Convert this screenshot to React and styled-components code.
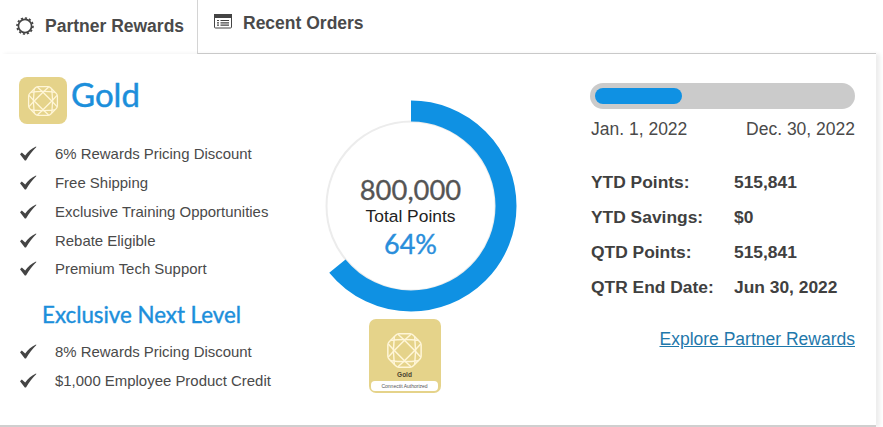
import styled, { createGlobalStyle } from "styled-components";

const benefits = [
  "6% Rewards Pricing Discount",
  "Free Shipping",
  "Exclusive Training Opportunities",
  "Rebate Eligible",
  "Premium Tech Support",
];
const nextBenefits = ["8% Rewards Pricing Discount", "$1,000 Employee Product Credit"];
const stats = [
  ["YTD Points:", "515,841"],
  ["YTD Savings:", "$0"],
  ["QTD Points:", "515,841"],
  ["QTR End Date:", "Jun 30, 2022"],
];

const GlobalStyle = createGlobalStyle`
  html, body {
    margin: 0;
    padding: 0;
    background: #fff;
    font-family: "Liberation Sans", Arial, sans-serif;
  }
`;

const Page = styled.div`
  width: 883px;
  height: 427px;
  overflow: hidden;
`;

const Panel = styled.div`
  width: 876px;
  height: 427px;
  display: flex;
  flex-direction: column;
`;

const Tabs = styled.div`
  display: flex;
  height: 54px;
`;

const Tab = styled.div`
  display: flex;
  align-items: flex-start;
  box-sizing: border-box;
  font-weight: bold;
  font-size: 17.5px;
  color: #4a4a4a;
  &.active {
    width: 198px;
    padding: 17px 0 0 16px;
    gap: 11px;
    border-right: 1px solid #d4d4d4;
  }
  &.idle {
    flex: 1;
    padding: 14px 0 0 16px;
    gap: 11px;
    border-bottom: 1px solid #cfcfcf;
  }
`;

const TabLabel = styled.span`
  line-height: 18px;
`;

const Content = styled.div`
  flex: 1;
  display: flex;
  background: #fff;
  border-bottom: 2px solid #cfcfcf;
  box-shadow: 4px 0 4px rgba(0, 0, 0, 0.07);
`;

const LeftColumn = styled.div`
  width: 304.5px;
  box-sizing: border-box;
  padding: 23px 0 0 19px;
`;

const Level = styled.div`
  display: flex;
  align-items: flex-start;
  gap: 4px;
  margin-bottom: 15.4px;
`;

const BadgeIcon = styled.div`
  width: 48px;
  height: 47px;
  display: flex;
  align-items: center;
  justify-content: center;
  background: #e5d38a;
  border-radius: 8px;
`;

const LevelName = styled.div`
  font-family: Lato, sans-serif;
  font-size: 33px;
  line-height: 34px;
  color: #1c8fdb;
  -webkit-text-stroke: 0.5px #1c8fdb;
`;

const Benefits = styled.ul`
  list-style: none;
  margin: 0;
  padding: 0;
`;

const Benefit = styled.li`
  display: flex;
  align-items: center;
  height: 28.8px;
  gap: 18px;
  font-size: 14.95px;
  color: #4a4a4a;
`;

const NextTitle = styled.div`
  margin: 18px 0 8px 23px;
  font-family: Lato, sans-serif;
  font-size: 22.3px;
  line-height: 28px;
  color: #1c8fdb;
  -webkit-text-stroke: 0.4px #1c8fdb;
`;

const CenterColumn = styled.div`
  width: 212px;
  padding-top: 46px;
  display: flex;
  flex-direction: column;
  align-items: center;
`;

const Ring = styled.div`
  position: relative;
  width: 212px;
  height: 212px;
`;

const RingText = styled.div`
  position: absolute;
  inset: 0;
  padding-top: 23px;
  box-sizing: border-box;
  display: flex;
  flex-direction: column;
  align-items: center;
  justify-content: center;
`;

const Total = styled.div`
  font-family: Lato, sans-serif;
  font-size: 27.4px;
  line-height: 34px;
  color: #555;
  -webkit-text-stroke: 0.3px #555;
`;

const TotalLabel = styled.div`
  font-size: 17.4px;
  line-height: 19px;
  color: #222;
`;

const Percent = styled.div`
  font-family: Lato, sans-serif;
  font-size: 27px;
  line-height: 36px;
  color: #2a8edb;
  -webkit-text-stroke: 0.4px #2a8edb;
`;

const Certificate = styled.div`
  margin-top: 7px;
  margin-right: 12px;
  width: 72px;
  height: 74px;
  box-sizing: border-box;
  padding-top: 13px;
  display: flex;
  flex-direction: column;
  align-items: center;
  background: #e5d38a;
  border-radius: 7px;
`;

const CertificateName = styled.div`
  margin-top: 1px;
  font-size: 6.5px;
  font-weight: bold;
  line-height: 9px;
  color: #4a4430;
`;

const CertificateTag = styled.div`
  margin-top: 2px;
  width: 67px;
  height: 10px;
  background: #fff;
  border-radius: 4px;
  text-align: center;
  font-size: 5px;
  line-height: 10px;
  color: #555;
`;

const RightColumn = styled.div`
  width: 265px;
  margin-left: 73.5px;
  padding-top: 29px;
`;

const Track = styled.div`
  height: 26px;
  box-sizing: border-box;
  padding: 5px;
  background: #cbcbcb;
  border-radius: 13px;
`;

const Fill = styled.div`
  height: 16px;
  background: #0f91e3;
  border-radius: 8px;
`;

const Dates = styled.div`
  display: flex;
  justify-content: space-between;
  margin-top: 10px;
  padding-left: 1px;
  font-size: 17.5px;
  line-height: 20px;
  color: #4a4a4a;
`;

const Stats = styled.div`
  margin-top: 26px;
  padding-left: 1px;
`;

const StatRow = styled.div`
  display: flex;
  height: 35px;
  align-items: center;
  font-weight: bold;
  font-size: 17.4px;
  color: #404040;
`;

const StatLabel = styled.span`
  width: 143px;
`;

const ExploreLink = styled.a`
  display: block;
  margin-top: 24px;
  text-align: right;
  font-size: 17.5px;
  line-height: 20px;
  color: #1f78ab;
  text-decoration: underline;
`;

const GearIcon = () => (
  <svg width="18" height="18" viewBox="0 0 18 18" fill="none">
    <circle cx="9" cy="9" r="6.6" stroke="#444" strokeWidth="1.7" />
    <circle cx="9" cy="9" r="8" stroke="#444" strokeWidth="1.6" strokeDasharray="2.2 1.95" />
  </svg>
);

const ListIcon = () => (
  <svg width="18" height="15" viewBox="0 0 18 15">
    <rect x="0.5" y="0.5" width="17" height="13.5" rx="1" fill="#fff" stroke="#444" />
    <rect x="0" y="0" width="18" height="4" fill="#444" />
    <path d="M3 6.5h2M3 8.8h2M3 11.1h2M6.5 6.5h8.5M6.5 8.8h8.5M6.5 11.1h8.5" stroke="#444" strokeWidth="1.2" />
  </svg>
);

const CheckIcon = () => (
  <svg width="18" height="15" viewBox="0 0 18 15" style={{ flexShrink: 0 }}>
    <path d="M1 8.2L2.800 6.400l3.400 3.200C9 5.600 12.500 2.600 17 0.500l0.400 0.600C13.500 4.800 10 9.400 7 14.500H5.800z" fill="#444" />
  </svg>
);

const GemIcon = ({ size, stroke = "#fff6d8" }) => (
  <svg width={size} height={size} viewBox="0 0 40 40" fill="none" stroke={stroke} strokeWidth="1.6" strokeLinejoin="round">
    <path d="M14 2h12q2 0 3.500 1.500l7 7Q38 12 38 14v12q0 2-1.500 3.500l-7 7Q28 38 26 38H14q-2 0-3.500-1.500l-7-7Q2 28 2 26V14q0-2 1.500-3.500l7-7Q12 2 14 2z" />
    <path d="M20 9l11 11-11 11L9 20z" />
    <path d="M5 9Q20 7 35 9M5 31Q20 33 35 31M9 5Q7 20 9 35M31 5Q33 20 31 35" />
    <path d="M13 2.500L20 9l7-6.500M13 37.500L20 31l7 6.500M2.500 13L9 20l-6.500 7M37.500 13L31 20l6.500 7" />
  </svg>
);

const ProgressRing = () => {
  const r = 95;
  const c = 2 * Math.PI * r;
  return (
    <svg width="212" height="212" viewBox="0 0 212 212" fill="none">
      <circle cx="106" cy="106" r="84.5" stroke="#ececec" strokeWidth="2" />
      <circle
        cx="106"
        cy="106"
        r={r}
        stroke="#0f91e3"
        strokeWidth="21"
        strokeDasharray={`${c * 0.64} ${c}`}
        transform="rotate(-90 106 106)"
      />
    </svg>
  );
};

export default function App() {
  return (
    <Page>
      <GlobalStyle />
      <Panel>
        <Tabs>
          <Tab className="active">
            <GearIcon />
            <TabLabel>Partner Rewards</TabLabel>
          </Tab>
          <Tab className="idle">
            <ListIcon />
            <TabLabel>Recent Orders</TabLabel>
          </Tab>
        </Tabs>
        <Content>
          <LeftColumn>
            <Level>
              <BadgeIcon>
                <GemIcon size={32} />
              </BadgeIcon>
              <LevelName>Gold</LevelName>
            </Level>
            <Benefits>
              {benefits.map((b) => (
                <Benefit key={b}>
                  <CheckIcon />
                  {b}
                </Benefit>
              ))}
            </Benefits>
            <NextTitle>Exclusive Next Level</NextTitle>
            <Benefits>
              {nextBenefits.map((b) => (
                <Benefit key={b}>
                  <CheckIcon />
                  {b}
                </Benefit>
              ))}
            </Benefits>
          </LeftColumn>
          <CenterColumn>
            <Ring>
              <ProgressRing />
              <RingText>
                <Total>800,000</Total>
                <TotalLabel>Total Points</TotalLabel>
                <Percent>64%</Percent>
              </RingText>
            </Ring>
            <Certificate>
              <GemIcon size={37} />
              <CertificateName>Gold</CertificateName>
              <CertificateTag>Connectit Authorized</CertificateTag>
            </Certificate>
          </CenterColumn>
          <RightColumn>
            <Track>
              <Fill style={{ width: `${(87 / 255) * 100}%` }} />
            </Track>
            <Dates>
              <span>Jan. 1, 2022</span>
              <span>Dec. 30, 2022</span>
            </Dates>
            <Stats>
              {stats.map(([label, value]) => (
                <StatRow key={label}>
                  <StatLabel>{label}</StatLabel>
                  <span>{value}</span>
                </StatRow>
              ))}
            </Stats>
            <ExploreLink href="#">Explore Partner Rewards</ExploreLink>
          </RightColumn>
        </Content>
      </Panel>
    </Page>
  );
}
